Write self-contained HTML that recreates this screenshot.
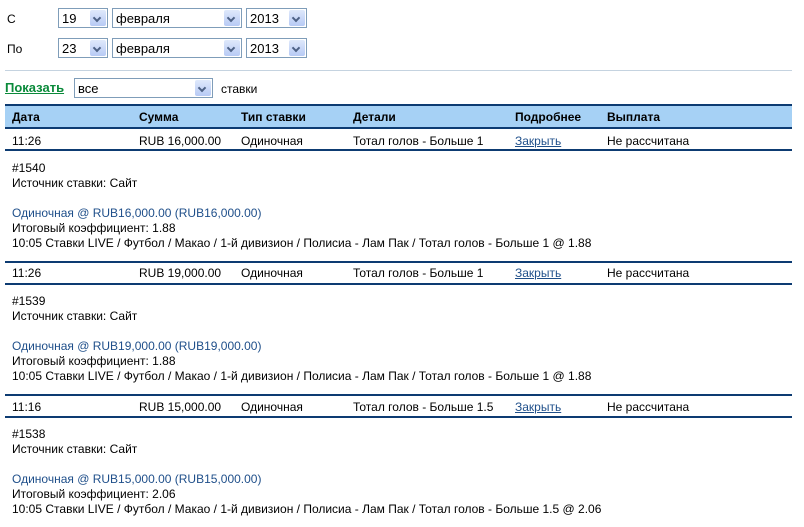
<!DOCTYPE html>
<html><head><meta charset="utf-8"><style>
body{margin:0;width:804px;height:527px;background:#fff;font-family:"Liberation Sans",Arial,sans-serif;font-size:12px;color:#000;position:relative;overflow:hidden}
.a{position:absolute;white-space:nowrap;line-height:14px}
.sel{position:absolute;height:20px;border:1px solid #7f9db9;box-sizing:border-box;background:#fff}
.sel span{position:absolute;left:3px;top:2px;font-size:13px}
.sel i{position:absolute;right:1px;top:1px;width:16px;height:16px;background:linear-gradient(#dfe9fb,#b7caf5);border-radius:2px}
.sel i:after{content:"";position:absolute;left:4px;top:5px;width:4px;height:4px;border-right:2px solid #4d6185;border-bottom:2px solid #4d6185;transform:rotate(45deg)}
.line{position:absolute;left:5px;width:787px;height:2px;background:#0d3b72}
.blue{color:#1f4f8a}
</style></head><body>
<div class="a" style="left:7px;top:12px">С</div>
<div class="a" style="left:7px;top:42px">По</div>
<div class="sel" style="left:58px;top:8px;width:50px"><span>19</span><i></i></div>
<div class="sel" style="left:112px;top:8px;width:130px"><span>февраля</span><i></i></div>
<div class="sel" style="left:246px;top:8px;width:61px"><span>2013</span><i></i></div>
<div class="sel" style="left:58px;top:38px;width:50px"><span>23</span><i></i></div>
<div class="sel" style="left:112px;top:38px;width:130px"><span>февраля</span><i></i></div>
<div class="sel" style="left:246px;top:38px;width:61px"><span>2013</span><i></i></div>
<div style="position:absolute;left:5px;top:70px;width:787px;height:1px;background:#c5d3e0"></div>
<div class="a" style="left:5px;top:81px;color:#0a8a3a;font-weight:bold;text-decoration:underline;font-size:13px">Показать</div>
<div class="sel" style="left:74px;top:78px;width:139px"><span>все</span><i></i></div>
<div class="a" style="left:221px;top:82px">ставки</div>
<div style="position:absolute;left:5px;top:104px;width:787px;height:25px;background:#a6d1f5;border-top:2px solid #0d3b72;border-bottom:2px solid #0d3b72;box-sizing:border-box"></div>
<div class="a" style="left:12px;top:110px;font-weight:bold">Дата</div>
<div class="a" style="left:139px;top:110px;font-weight:bold">Сумма</div>
<div class="a" style="left:241px;top:110px;font-weight:bold">Тип ставки</div>
<div class="a" style="left:353px;top:110px;font-weight:bold">Детали</div>
<div class="a" style="left:515px;top:110px;font-weight:bold">Подробнее</div>
<div class="a" style="left:607px;top:110px;font-weight:bold">Выплата</div>

<!-- block 1 -->
<div class="a" style="left:12px;top:134px">11:26</div>
<div class="a" style="left:139px;top:134px">RUB 16,000.00</div>
<div class="a" style="left:241px;top:134px">Одиночная</div>
<div class="a" style="left:353px;top:134px">Тотал голов - Больше 1</div>
<div class="a" style="left:515px;top:134px;color:#1f4f8a;text-decoration:underline">Закрыть</div>
<div class="a" style="left:607px;top:134px">Не рассчитана</div>
<div class="line" style="top:149px"></div>
<div class="a" style="left:12px;top:161px">#1540</div>
<div class="a" style="left:12px;top:176px">Источник ставки: Сайт</div>
<div class="a blue" style="left:12px;top:206px">Одиночная @ RUB16,000.00 (RUB16,000.00)</div>
<div class="a" style="left:12px;top:221px">Итоговый коэффициент: 1.88</div>
<div class="a" style="left:12px;top:236px">10:05 Ставки LIVE / Футбол / Макао / 1-й дивизион / Полисиа - Лам Пак / Тотал голов - Больше 1 @ 1.88</div>

<!-- block 2 -->
<div class="line" style="top:261px"></div>
<div class="a" style="left:12px;top:266px">11:26</div>
<div class="a" style="left:139px;top:266px">RUB 19,000.00</div>
<div class="a" style="left:241px;top:266px">Одиночная</div>
<div class="a" style="left:353px;top:266px">Тотал голов - Больше 1</div>
<div class="a" style="left:515px;top:266px;color:#1f4f8a;text-decoration:underline">Закрыть</div>
<div class="a" style="left:607px;top:266px">Не рассчитана</div>
<div class="line" style="top:283px"></div>
<div class="a" style="left:12px;top:294px">#1539</div>
<div class="a" style="left:12px;top:309px">Источник ставки: Сайт</div>
<div class="a blue" style="left:12px;top:339px">Одиночная @ RUB19,000.00 (RUB19,000.00)</div>
<div class="a" style="left:12px;top:354px">Итоговый коэффициент: 1.88</div>
<div class="a" style="left:12px;top:369px">10:05 Ставки LIVE / Футбол / Макао / 1-й дивизион / Полисиа - Лам Пак / Тотал голов - Больше 1 @ 1.88</div>

<!-- block 3 -->
<div class="line" style="top:394px"></div>
<div class="a" style="left:12px;top:400px">11:16</div>
<div class="a" style="left:139px;top:400px">RUB 15,000.00</div>
<div class="a" style="left:241px;top:400px">Одиночная</div>
<div class="a" style="left:353px;top:400px">Тотал голов - Больше 1.5</div>
<div class="a" style="left:515px;top:400px;color:#1f4f8a;text-decoration:underline">Закрыть</div>
<div class="a" style="left:607px;top:400px">Не рассчитана</div>
<div class="line" style="top:416px"></div>
<div class="a" style="left:12px;top:427px">#1538</div>
<div class="a" style="left:12px;top:442px">Источник ставки: Сайт</div>
<div class="a blue" style="left:12px;top:472px">Одиночная @ RUB15,000.00 (RUB15,000.00)</div>
<div class="a" style="left:12px;top:487px">Итоговый коэффициент: 2.06</div>
<div class="a" style="left:12px;top:502px">10:05 Ставки LIVE / Футбол / Макао / 1-й дивизион / Полисиа - Лам Пак / Тотал голов - Больше 1.5 @ 2.06</div>
</body></html>
